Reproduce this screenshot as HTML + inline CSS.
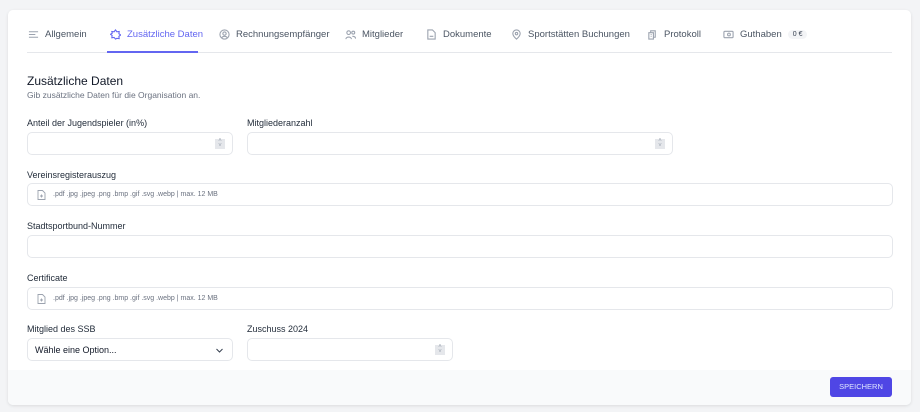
<!DOCTYPE html>
<html><head><meta charset="utf-8"><style>
*{box-sizing:border-box;margin:0;padding:0}
body{width:920px;height:412px;background:#f3f4f6;font-family:"Liberation Sans",sans-serif;position:relative;overflow:hidden;color:#111827}
.card{position:absolute;left:8px;top:10px;width:903px;height:395px;background:#fff;border-radius:5px;box-shadow:0 1px 3px rgba(0,0,0,.1);overflow:hidden}
.a{position:absolute}
.tab{position:absolute;top:19px;font-size:9.5px;color:#4b5563;white-space:nowrap;display:flex;align-items:center;gap:6px}
.tab svg{width:11px;height:11px;fill:none;stroke:#9ca3af;stroke-width:1.2}
.lbl{position:absolute;left:27px;font-size:9px;color:#1f2937}
.inp{position:absolute;height:23px;border:1px solid #e5e7eb;border-radius:5px;background:#fff}
.spin{position:absolute;right:7px;top:6px;width:10px;height:10px;background:#e5e7eb;font-size:6px;color:#9ca3af;text-align:center;line-height:5px}
.file{font-size:7px;color:#6b7280;display:flex;align-items:center;padding-left:9px;gap:7px}
</style></head><body>
<div class="card">
<div class="tab" style="left:20px"><svg viewBox="0 0 12 12"><path d="M1 3h10M1 6h7M1 9h10"/></svg>Allgemein</div>
<div class="tab" style="left:102px;color:#6366f1"><svg viewBox="0 0 12 12" style="stroke:#6366f1"><path d="M6 1l1.5 2 2.5-.3-.3 2.5 2 1.3-2 1.5.3 2.5-2.5-.3L6 11 4.5 9.2 2 9.5l.3-2.5L.5 5.8l2-1.3L2 2.7l2.5.3z"/></svg>Zusätzliche Daten</div>
<div class="tab" style="left:211px"><svg viewBox="0 0 12 12"><circle cx="6" cy="6" r="5"/><circle cx="6" cy="5" r="1.8"/><path d="M3 9.5c1.5-2 4.5-2 6 0"/></svg>Rechnungsempfänger</div>
<div class="tab" style="left:337px"><svg viewBox="0 0 12 12"><circle cx="4" cy="4" r="2"/><circle cx="9" cy="4" r="1.6"/><path d="M1 11c0-3 6-3 6 0M8 8c2 0 3.5.8 3.5 2.5"/></svg>Mitglieder</div>
<div class="tab" style="left:418px"><svg viewBox="0 0 12 12"><path d="M2 1h5l3 3v7H2zM4 8h4"/></svg>Dokumente</div>
<div class="tab" style="left:503px"><svg viewBox="0 0 12 12"><path d="M6 11S2 7.5 2 5a4 4 0 018 0c0 2.5-4 6-4 6z"/><circle cx="6" cy="5" r="1.3"/></svg>Sportstätten Buchungen</div>
<div class="tab" style="left:639px"><svg viewBox="0 0 12 12"><path d="M2 4h5v7H2zM4 4V2h5v7H7M4 6h1M4 8h1"/></svg>Protokoll</div>
<div class="tab" style="left:715px"><svg viewBox="0 0 12 12"><rect x="1" y="2.5" width="10" height="7" rx="1"/><circle cx="6.5" cy="6" r="1.5"/></svg>Guthaben <span style="background:#f3f4f6;border-radius:8px;padding:1px 5px;font-size:7px;color:#374151">0 €</span></div>
<div class="a" style="left:19px;top:42px;width:865px;height:1px;background:#e5e7eb"></div>
<div class="a" style="left:99px;top:41px;width:91px;height:2px;background:#6366f1"></div>
</div>
<div class="a" style="left:27px;top:74px;font-size:12px;color:#111827">Zusätzliche Daten</div>
<div class="a" style="left:27px;top:90px;font-size:8.5px;color:#6b7280">Gib zusätzliche Daten für die Organisation an.</div>

<div class="lbl" style="top:118px">Anteil der Jugendspieler (in%)</div>
<div class="lbl" style="left:247px;top:118px">Mitgliederanzahl</div>
<div class="inp" style="left:27px;top:132px;width:206px"><div class="spin">˄<br>˅</div></div>
<div class="inp" style="left:247px;top:132px;width:426px"><div class="spin">˄<br>˅</div></div>

<div class="lbl" style="top:170px">Vereinsregisterauszug</div>
<div class="inp file" style="left:27px;top:183px;width:866px"><svg width="9" height="10" viewBox="0 0 9 10" fill="none" stroke="#9ca3af" stroke-width=".9"><path d="M1 .5h4.5L8 3v6.5H1zM4.5 4.5v3M3 6h3"/></svg>.pdf .jpg .jpeg .png .bmp .gif .svg .webp | max. 12 MB</div>

<div class="lbl" style="top:221px">Stadtsportbund-Nummer</div>
<div class="inp" style="left:27px;top:235px;width:866px"></div>

<div class="lbl" style="top:273px">Certificate</div>
<div class="inp file" style="left:27px;top:287px;width:866px"><svg width="9" height="10" viewBox="0 0 9 10" fill="none" stroke="#9ca3af" stroke-width=".9"><path d="M1 .5h4.5L8 3v6.5H1zM4.5 4.5v3M3 6h3"/></svg>.pdf .jpg .jpeg .png .bmp .gif .svg .webp | max. 12 MB</div>

<div class="lbl" style="top:324px">Mitglied des SSB</div>
<div class="lbl" style="left:247px;top:324px">Zuschuss 2024</div>
<div class="inp" style="left:27px;top:338px;width:206px;font-size:9px;color:#111827;padding:6px 0 0 7px">Wähle eine Option...<svg class="a" style="right:9px;top:9px" width="7" height="5" viewBox="0 0 7 5" fill="none" stroke="#374151" stroke-width="1"><path d="M.5 1l3 3 3-3"/></svg></div>
<div class="inp" style="left:247px;top:338px;width:206px"><div class="spin">˄<br>˅</div></div>

<div class="a" style="left:8px;top:370px;width:903px;height:35px;background:#f9fafb;border-radius:0 0 5px 5px"></div>
<div class="a" style="left:830px;top:377px;width:62px;height:20px;background:#4f46e5;border-radius:3px;color:#e0e7ff;font-size:7.5px;text-align:center;line-height:20px">SPEICHERN</div>
</body></html>
